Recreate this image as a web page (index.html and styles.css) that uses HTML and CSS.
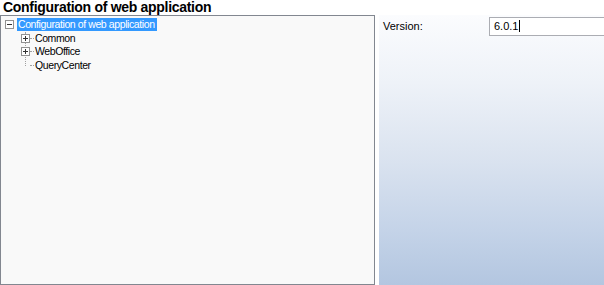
FILE: index.html
```html
<!DOCTYPE html>
<html>
<head>
<meta charset="utf-8">
<link rel="stylesheet" href="styles.css">
</head>
<body>
<div class="app">
  <div class="title">Configuration of web application</div>
  <div class="main">
    <div class="tree">
      <div class="row root">
        <span class="box minus"></span>
        <span class="label sel">Configuration of web application</span>
      </div>
      <div class="children">
        <div class="row child">
          <span class="box plus"></span><span class="dash"></span>
          <span class="label">Common</span>
        </div>
        <div class="row child">
          <span class="box plus"></span><span class="dash"></span>
          <span class="label">WebOffice</span>
        </div>
        <div class="row child last">
          <span class="nobox"></span><span class="dash"></span>
          <span class="label">QueryCenter</span>
        </div>
      </div>
    </div>
    <div class="props">
      <div class="prop">
        <span class="plabel">Version:</span>
        <div class="input">6.0.1<span class="caret"></span></div>
      </div>
    </div>
  </div>
</div>
</body>
</html>
```
FILE: styles.css
```css
html, body { margin: 0; padding: 0; background: #fff; }
body { font-family: "Liberation Sans", Arial, sans-serif; width: 604px; height: 285px; overflow: hidden; }
.app { display: flex; flex-direction: column; height: 285px; }
.title { font-weight: bold; font-size: 14px; line-height: 15px; height: 15px; padding-left: 3px; color: #000; letter-spacing: -0.3px; }
.main { flex: 1; display: flex; gap: 4px; }
.tree { width: 375px; border: 1px solid #828790; background: #f9f9f9; font-size: 10.5px; letter-spacing: -0.4px; padding-top: 2px; box-sizing: border-box; height: 270px; }
.row { display: flex; align-items: center; height: 13.6px; position: relative; }
.root { padding-left: 4px; }
.box { width: 7px; height: 7px; border: 1px solid #919191; background: #fff; position: relative; flex: none; }
.box::before { content: ""; position: absolute; left: 1px; top: 3px; width: 5px; height: 1px; background: #333; }
.plus::after { content: ""; position: absolute; left: 3px; top: 1px; width: 1px; height: 5px; background: #333; }
.label { color: #000; padding: 0 2px 0 1px; line-height: 13px; }
.root .label { margin-left: 3px; }
.sel { background: #3399ff; color: #fff; }
.children { position: relative; padding-left: 20px; }
.children::before { content: ""; position: absolute; left: 24px; top: 0; height: 34px; border-left: 1px dotted #a0a0a0; }
.child .box { z-index: 1; }
.nobox { width: 9px; flex: none; }
.dash { width: 4px; border-top: 1px dotted #a0a0a0; flex: none; }
.props { flex: 1; background: linear-gradient(to bottom, #fbfcfe 0%, #eef2f8 25%, #d9e2ef 55%, #c4d3e8 80%, #b3c6e0 100%); padding-top: 2px; }
.prop { display: flex; align-items: center; height: 18px; }
.plabel { font-size: 11px; color: #000; padding-left: 4px; width: 106px; }
.input { flex: 1; height: 17px; border: 1px solid #abadb3; border-right: none; background: #fff; font-size: 11px; line-height: 17px; padding-left: 4px; display: flex; align-items: center; }
.caret { display: inline-block; width: 1px; height: 12px; background: #000; margin-left: 1px; }
```
